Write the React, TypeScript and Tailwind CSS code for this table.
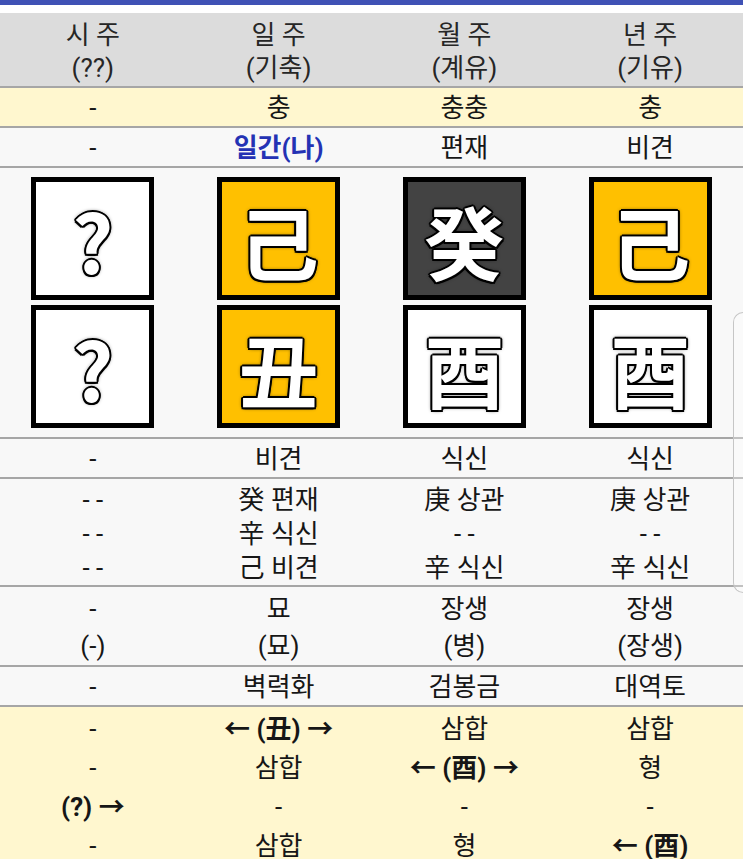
import React from "react";

type Cell = React.ReactNode[];

const FONT = "font-['Roboto','Noto_Sans_CJK_KR',sans-serif]";

function Row({
	cells,
	className,
	line,
}: {
	cells: Cell[];
	className: string;
	line: string;
}) {
	return (
		<div className={`grid grid-cols-4 text-center border-b-2 border-[#a6a6a6] ${className}`}>
			{cells.map((cell, i) => (
				<div key={i} className={`flex flex-col items-center ${line}`}>
					{cell.map((txt, j) => (
						<div key={j}>{txt}</div>
					))}
				</div>
			))}
		</div>
	);
}

const GLYPH_SHADOW =
	"[text-shadow:2px_0_0_#000,-2px_0_0_#000,0_2px_0_#000,0_-2px_0_#000,1.5px_1.5px_0_#000,-1.5px_-1.5px_0_#000,1.5px_-1.5px_0_#000,-1.5px_1.5px_0_#000,0_0_4px_#000]";

type Tone = "white" | "gold" | "dark";

function Pillar({ ch, tone }: { ch: string; tone: Tone }) {
	const bg =
		tone === "gold" ? "bg-[#ffc000]" : tone === "dark" ? "bg-[#434343]" : "bg-white";
	return (
		<div
			className={`w-[123px] h-[123px] border-[5px] border-black flex items-center justify-center ${bg}`}
		>
			<span
				className={`text-[80px] leading-none font-bold text-white font-['Noto_Sans_CJK_KR',sans-serif] ${GLYPH_SHADOW}`}
			>
				{ch}
			</span>
		</div>
	);
}

const pillars: { top: [string, Tone]; bottom: [string, Tone] }[] = [
	{ top: ["?", "white"], bottom: ["?", "white"] },
	{ top: ["己", "gold"], bottom: ["丑", "gold"] },
	{ top: ["癸", "dark"], bottom: ["酉", "white"] },
	{ top: ["己", "gold"], bottom: ["酉", "white"] },
];

export default function App() {
	return (
		<div className={`relative w-[743px] h-[859px] overflow-hidden bg-[#f8f8f8] text-[26px] font-normal text-[#161616] ${FONT}`}>
			<div className="h-[5px] bg-[#3f51b5]" />
			<div className="h-[8px] bg-white" />

			{/* header */}
			<Row
				className="bg-[#dcdcdc] text-[#262626] pt-[6px] pb-[1px]"
				line="leading-[33px]"
				cells={[
					["시 주", "(??)"],
					["일 주", "(기축)"],
					["월 주", "(계유)"],
					["년 주", "(기유)"],
				]}
			/>

			<Row
				className="bg-[#fff7cf] pt-[3px]"
				line="leading-[35px]"
				cells={[["-"], ["충"], ["충충"], ["충"]]}
			/>

			<Row
				className="pt-[3px]"
				line="leading-[35px]"
				cells={[
					["-"],
					[<span className="font-bold text-[#2432b4]">일간(나)</span>],
					["편재"],
					["비견"],
				]}
			/>

			{/* pillars */}
			<div className="grid grid-cols-4 border-b-2 border-[#a6a6a6] pt-[9px] pb-[9px]">
				{pillars.map((p, i) => (
					<div key={i} className="flex flex-col items-center gap-[5px]">
						<Pillar ch={p.top[0]} tone={p.top[1]} />
						<Pillar ch={p.bottom[0]} tone={p.bottom[1]} />
					</div>
				))}
			</div>

			<Row
				className="pt-[3px]"
				line="leading-[35px]"
				cells={[["-"], ["비견"], ["식신"], ["식신"]]}
			/>

			<Row
				className="pt-[4px]"
				line="leading-[34px]"
				cells={[
					["- -", "- -", "- -"],
					["癸 편재", "辛 식신", "己 비견"],
					["庚 상관", "- -", "辛 식신"],
					["庚 상관", "- -", "辛 식신"],
				]}
			/>

			<Row
				className="pt-[4px]"
				line="leading-[37px]"
				cells={[
					["-", "(-)"],
					["묘", "(묘)"],
					["장생", "(병)"],
					["장생", "(장생)"],
				]}
			/>

			<Row
				className="pt-[3px]"
				line="leading-[35px]"
				cells={[["-"], ["벽력화"], ["검봉금"], ["대역토"]]}
			/>

			<div className="grid grid-cols-4 text-center bg-[#fff7cf] pt-[3px] h-full">
				<div className="flex flex-col items-center leading-[39px]">
					<div>-</div>
					<div>-</div>
					<div className="font-bold">(?) →</div>
					<div>-</div>
				</div>
				<div className="flex flex-col items-center leading-[39px]">
					<div className="font-bold">← (丑) →</div>
					<div>삼합</div>
					<div>-</div>
					<div>삼합</div>
				</div>
				<div className="flex flex-col items-center leading-[39px]">
					<div>삼합</div>
					<div className="font-bold">← (酉) →</div>
					<div>-</div>
					<div>형</div>
				</div>
				<div className="flex flex-col items-center leading-[39px]">
					<div>삼합</div>
					<div>형</div>
					<div>-</div>
					<div className="font-bold">← (酉)</div>
				</div>
			</div>

			{/* edge handle */}
			<div className="absolute right-0 top-[312px] h-[281px] w-[10px] rounded-l-[10px] border border-r-0 border-[#c6c6c6] bg-white/30" />
		</div>
	);
}
